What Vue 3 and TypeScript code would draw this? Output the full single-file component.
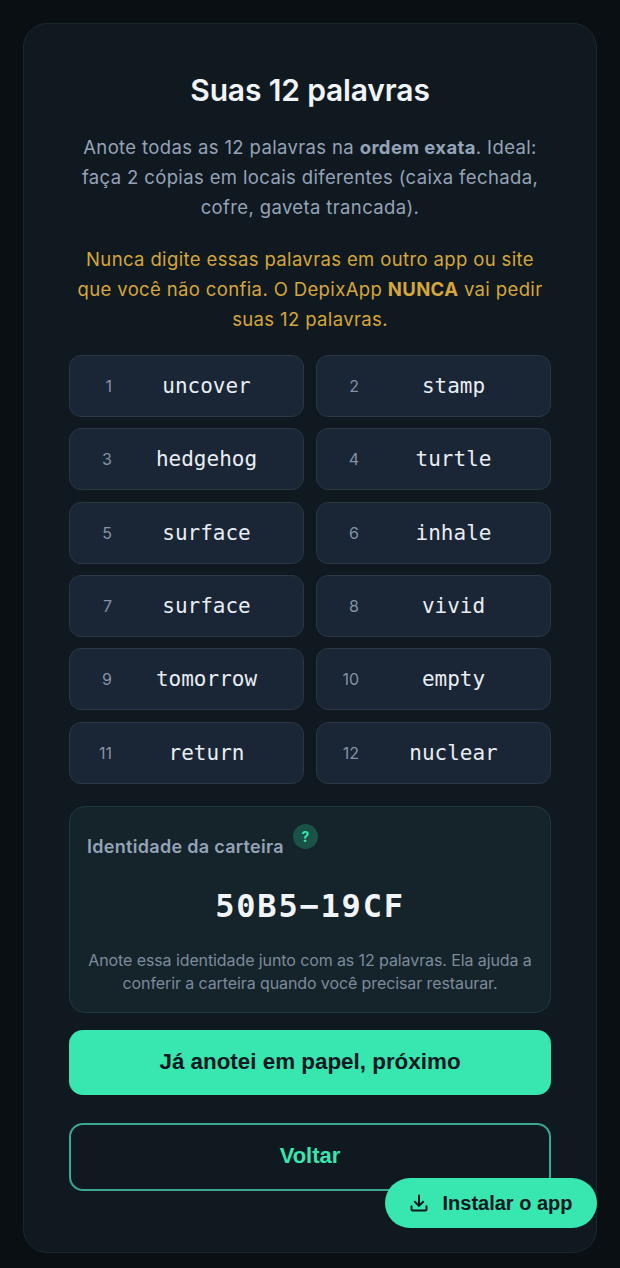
<template>
  <div class="page">
    <main class="card">
      <h1 class="title">Suas 12 palavras</h1>
      <p class="intro">
        Anote todas as 12 palavras na <strong>ordem exata</strong>. Ideal: faça 2 cópias em locais diferentes (caixa fechada, cofre, gaveta trancada).
      </p>
      <p class="warning">
        Nunca digite essas palavras em outro app ou site que você não confia. O DepixApp <strong>NUNCA</strong> vai pedir suas 12 palavras.
      </p>

      <ol class="words">
        <li v-for="(word, i) in words" :key="i" class="word">
          <span class="num">{{ i + 1 }}</span>
          <span class="text">{{ word }}</span>
        </li>
      </ol>

      <section class="identity">
        <div class="identity-head">
          <span class="identity-label">Identidade da carteira</span>
          <span class="help">?</span>
        </div>
        <div class="identity-code">50B5−19CF</div>
        <p class="identity-note">
          Anote essa identidade junto com as 12 palavras. Ela ajuda a conferir a carteira quando você precisar restaurar.
        </p>
      </section>

      <button class="btn primary">Já anotei em papel, próximo</button>
      <button class="btn secondary">Voltar</button>
    </main>

    <button class="install">
      <svg width="20" height="20" viewBox="0 0 24 24" fill="none" stroke="currentColor" stroke-width="2.4" stroke-linecap="round" stroke-linejoin="round">
        <path d="M12 3v12" />
        <path d="M7 10.5l5 5 5-5" />
        <path d="M3 16v3.5a1.5 1.5 0 0 0 1.5 1.5h15a1.5 1.5 0 0 0 1.5-1.5V16" />
      </svg>
      Instalar o app
    </button>
  </div>
</template>

<script setup lang="ts">
const words: string[] = [
  'uncover', 'stamp',
  'hedgehog', 'turtle',
  'surface', 'inhale',
  'surface', 'vivid',
  'tomorrow', 'empty',
  'return', 'nuclear'
]
</script>

<style>
html, body {
  margin: 0;
  background: #0a0f14;
}
</style>

<style scoped>
.page {
  position: relative;
  box-sizing: border-box;
  height: 1268px;
  padding: 23px 23px 15px;
  background: #0a0f14;
  font-family: Inter, "Noto Sans", sans-serif;
  overflow: hidden;
}

.card {
  box-sizing: border-box;
  height: 1230px;
  padding: 45px 45px 0;
  background: #111920;
  border: 1px solid #1a282d;
  border-radius: 24px;
}

.title {
  margin: 0 0 21px;
  color: #f1f5f9;
  font-size: 30px;
  line-height: 42px;
  font-weight: 600;
  text-align: center;
  letter-spacing: -0.15px;
}

.intro,
.warning {
  margin: 0;
  font-size: 18.5px;
  line-height: 30px;
  text-align: center;
  letter-spacing: 0.37px;
}

.intro {
  color: #94a3b8;
  margin-bottom: 22px;
}

.warning {
  color: #d4a63c;
  margin-bottom: 21px;
}

strong {
  font-weight: 700;
}

.words {
  list-style: none;
  margin: 0 0 22px;
  padding: 0;
  display: grid;
  grid-template-columns: 1fr 1fr;
  column-gap: 12px;
  row-gap: 11.33px;
}

.word {
  box-sizing: border-box;
  height: 62px;
  display: flex;
  align-items: center;
  padding: 0 2px 0 16px;
  background: #1a2535;
  border: 1px solid #2a3644;
  border-radius: 12px;
}

.num {
  width: 26px;
  text-align: right;
  color: #8492a6;
  font-size: 16px;
}

.text {
  flex: 1;
  text-align: center;
  color: #e8edf3;
  font-family: "DejaVu Sans Mono", "Liberation Mono", monospace;
  font-size: 21px;
}

.identity {
  box-sizing: border-box;
  height: 207px;
  padding: 17px 17px 0;
  margin-bottom: 17px;
  background: #15242a;
  border: 1px solid #1f3a3a;
  border-radius: 16px;
}

.identity-head {
  display: flex;
  align-items: flex-start;
  gap: 9px;
}

.identity-label {
  margin-top: 12px;
  color: #94a3b8;
  font-size: 18px;
  font-weight: 600;
  letter-spacing: 0.3px;
}

.help {
  width: 25px;
  height: 25px;
  border-radius: 50%;
  background: #1a5248;
  color: #38e6b0;
  font-size: 14px;
  font-weight: 700;
  line-height: 25px;
  text-align: center;
}

.identity-code {
  margin-top: 30px;
  color: #f1f5f9;
  font-family: "DejaVu Sans Mono", "Liberation Mono", monospace;
  font-size: 32px;
  font-weight: 700;
  letter-spacing: 1.8px;
  text-align: center;
}

.identity-note {
  margin: 24px 0 0;
  color: #7d8a9c;
  font-size: 16px;
  line-height: 23px;
  text-align: center;
  letter-spacing: -0.1px;
}

.btn {
  display: block;
  box-sizing: border-box;
  width: 100%;
  font-family: "Liberation Sans", Arial, sans-serif;
  font-weight: 700;
  cursor: pointer;
}

.primary {
  height: 65px;
  margin-bottom: 28px;
  background: #38e6b0;
  border: 0;
  border-radius: 14px;
  color: #0f1820;
  font-size: 22.4px;
}

.secondary {
  height: 68px;
  padding-bottom: 3px;
  background: transparent;
  border: 2px solid #3aa88e;
  border-radius: 14px;
  color: #38e6b0;
  font-size: 22px;
}

.install {
  position: absolute;
  right: 23px;
  bottom: 40px;
  height: 50px;
  width: 212px;
  display: flex;
  align-items: center;
  justify-content: center;
  gap: 13px;
  background: #38e6b0;
  border: 0;
  border-radius: 25px;
  color: #0f1820;
  font-family: "Liberation Sans", Arial, sans-serif;
  font-size: 20px;
  font-weight: 700;
}
</style>
